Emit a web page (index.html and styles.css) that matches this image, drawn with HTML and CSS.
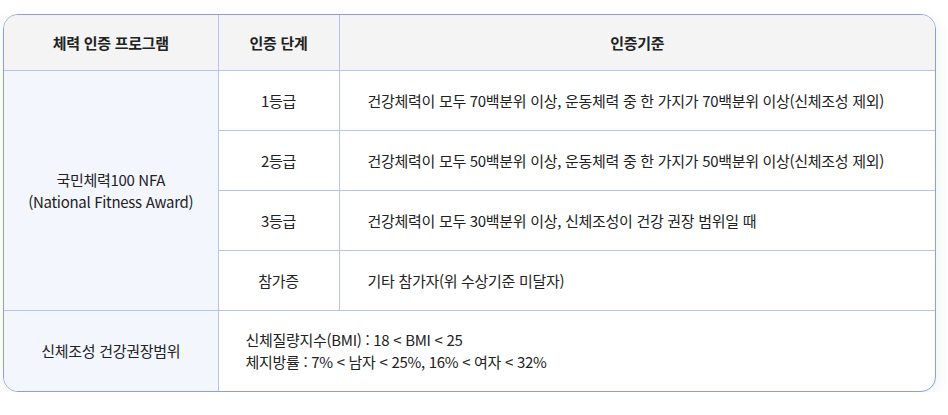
FILE: index.html
```html
<!DOCTYPE html>
<html lang="ko">
<head>
<meta charset="utf-8">
<link rel="stylesheet" href="styles.css">
</head>
<body>
<div class="page">
  <div class="card">
    <table class="cert">
      <colgroup>
        <col class="c1"><col class="c2"><col class="c3">
      </colgroup>
      <thead>
        <tr>
          <th>체력 인증 프로그램</th>
          <th>인증 단계</th>
          <th>인증기준</th>
        </tr>
      </thead>
      <tbody>
        <tr>
          <td class="prog" rowspan="4">국민체력100 NFA<br>(National Fitness Award)</td>
          <td class="stage">1등급</td>
          <td class="crit">건강체력이 모두 70백분위 이상, 운동체력 중 한 가지가 70백분위 이상(신체조성 제외)</td>
        </tr>
        <tr>
          <td class="stage">2등급</td>
          <td class="crit">건강체력이 모두 50백분위 이상, 운동체력 중 한 가지가 50백분위 이상(신체조성 제외)</td>
        </tr>
        <tr>
          <td class="stage">3등급</td>
          <td class="crit">건강체력이 모두 30백분위 이상, 신체조성이 건강 권장 범위일 때</td>
        </tr>
        <tr>
          <td class="stage">참가증</td>
          <td class="crit">기타 참가자(위 수상기준 미달자)</td>
        </tr>
        <tr class="last">
          <td class="prog">신체조성 건강권장범위</td>
          <td class="range" colspan="2">신체질량지수(BMI) : 18 &lt; BMI &lt; 25<br>체지방률 : 7% &lt; 남자 &lt; 25%, 16% &lt; 여자 &lt; 32%</td>
        </tr>
      </tbody>
    </table>
  </div>
</div>
</body>
</html>
```

FILE: styles.css
```css
html, body {
  margin: 0;
  padding: 0;
  background: #ffffff;
}
.page {
  padding: 14px 12px 0 3px;
}
.card {
  width: 931px;
  border: 1px solid #8b9fe0;
  border-radius: 15px;
  overflow: hidden;
  box-shadow: 2px 4px 14px rgba(40, 50, 90, 0.07);
  background: #fff;
}
.cert {
  width: 100%;
  border-collapse: collapse;
  table-layout: fixed;
  font-family: "Noto Sans CJK KR", "Noto Sans", sans-serif;
  font-size: 15px;
  color: #222222;
  letter-spacing: -0.3px;
}
.c1 { width: 214px; }
.c2 { width: 121px; }
.cert th, .cert td {
  border: 1px solid #b7c3ee;
  padding: 0;
  line-height: 22px;
}
.cert tr > :first-child { border-left: none; }
.cert tr > :last-child { border-right: none; }
.cert thead th { border-top: none; }
.cert tr.last td { border-bottom: none; }
.cert th {
  height: 55px;
  background: #f4f4f4;
  font-weight: 700;
  text-align: center;
}
.cert td { height: 59px; }
.prog {
  background: #f3f6fd;
  text-align: center;
}
.stage { text-align: center; }
.crit {
  text-align: left;
  padding-left: 28px !important;
}
.range {
  height: 80px !important;
  padding-left: 27px !important;
  text-align: left;
}
```
